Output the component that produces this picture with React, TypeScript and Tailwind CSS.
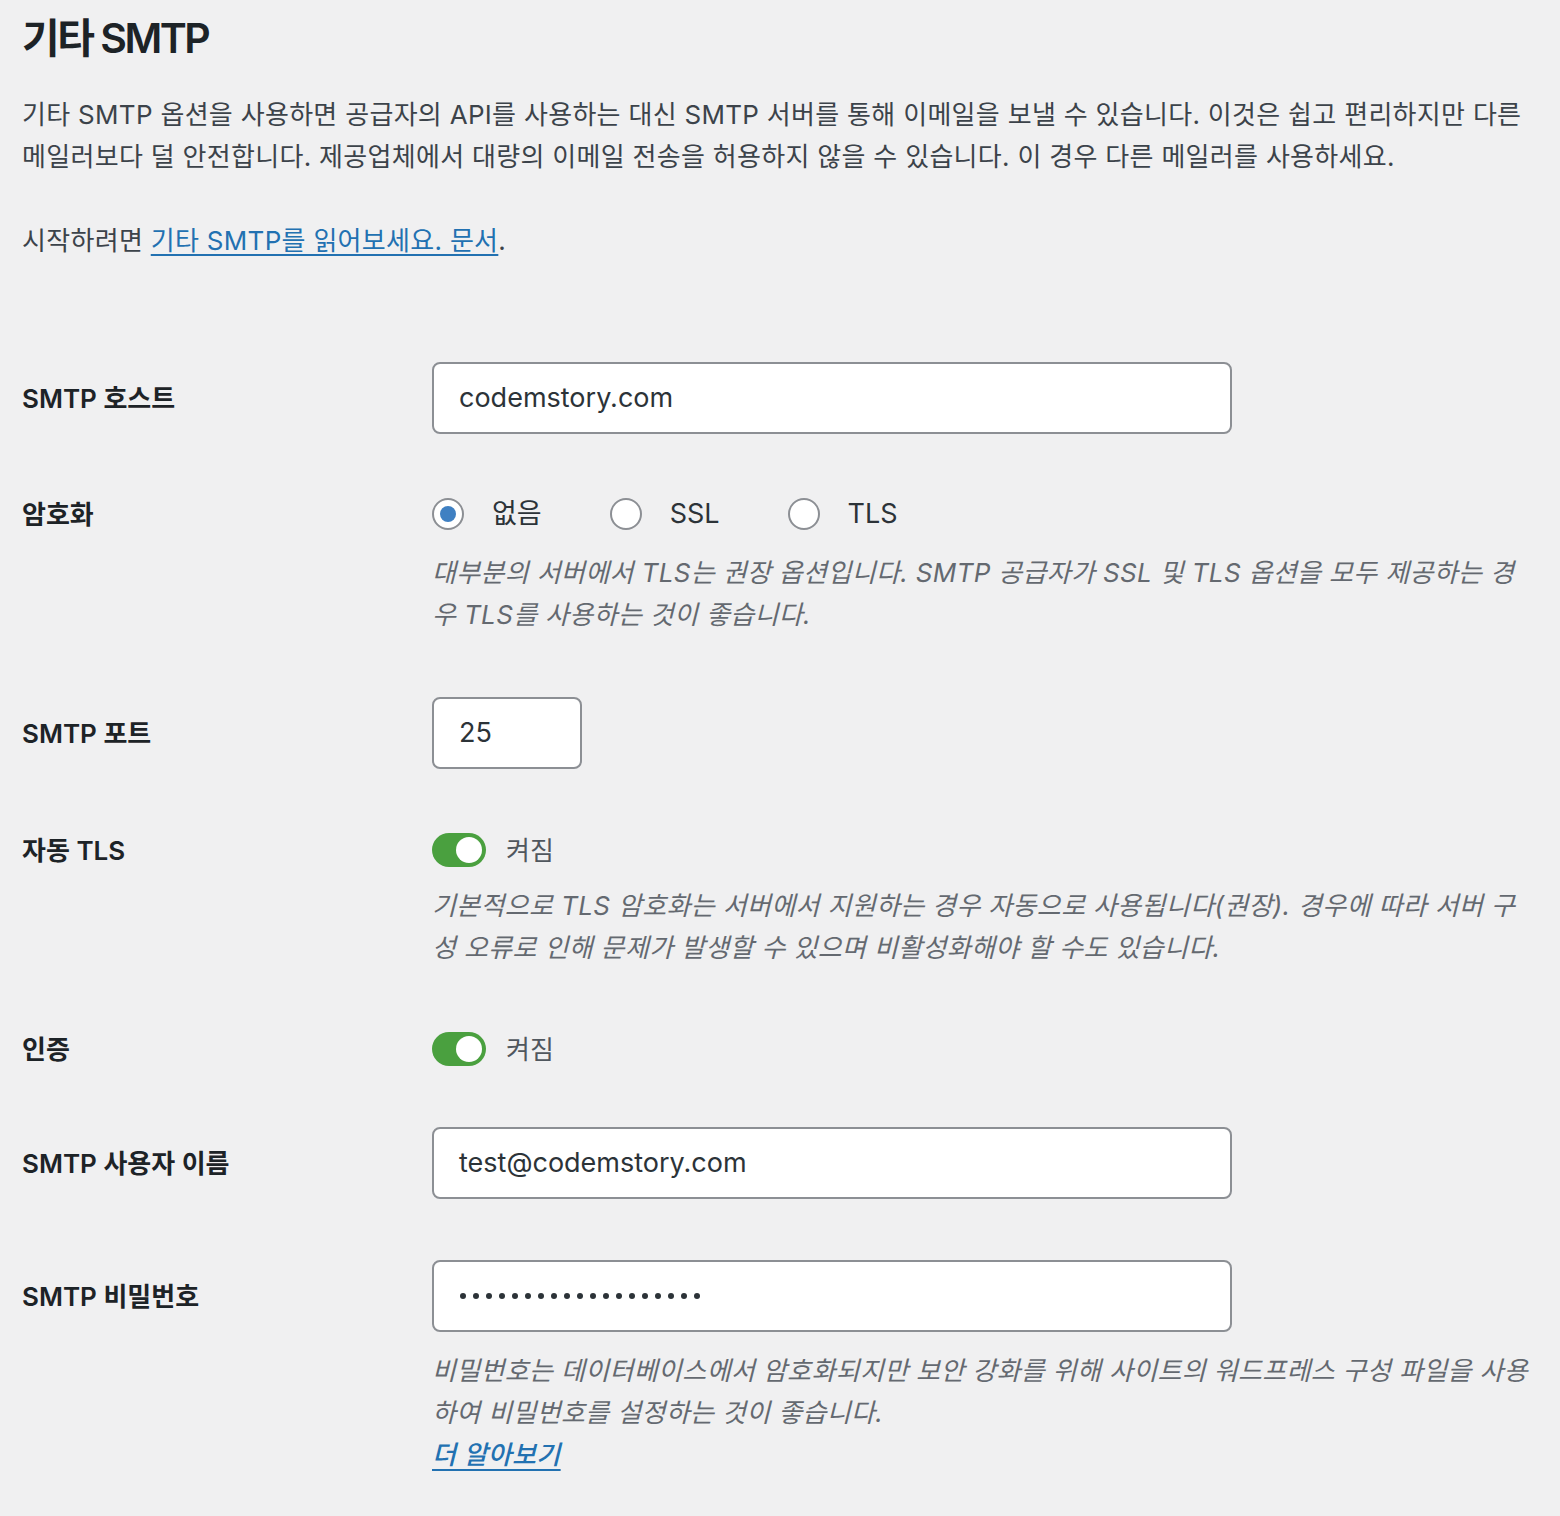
import React from 'react'

const Radio = ({ checked, label }: { checked?: boolean; label: string }) => (
  <label className="flex items-center mr-[68px]">
    <span className="w-[32px] h-[32px] rounded-full border-2 border-[#8c8f94] bg-white flex items-center justify-center">
      {checked && <span className="w-[16px] h-[16px] rounded-full bg-[#3f80c2]" />}
    </span>
    <span className="ml-[28px] text-[27px] text-[#2c3338]">{label}</span>
  </label>
)

const Toggle = () => (
  <div className="flex items-center h-[36px]">
    <span className="w-[54px] h-[34px] rounded-full bg-[#4aa03f] flex items-center justify-end px-[4px]">
      <span className="w-[26px] h-[26px] rounded-full bg-white" />
    </span>
    <span className="ml-[20px] text-[26px] text-[#50575e]">켜짐</span>
  </div>
)

const Field = ({ value, width = 'w-[800px]' }: { value: string; width?: string }) => (
  <div className={`${width} h-[72px] rounded-[8px] border-2 border-[#8c8f94] bg-white flex items-center pl-[25px] text-[27px] text-[#2c3338]`}>
    {value}
  </div>
)

function Label({ children, h }: { children: React.ReactNode; h: string }) {
  return (
    <div className={`w-[410px] shrink-0 flex items-center font-semibold text-[26px] text-[#1d2327] ${h}`}>
      {children}
    </div>
  )
}

const Desc = ({ children }: { children: React.ReactNode }) => (
  <p className="ml-[410px] mt-[17px] text-[26px] leading-[42px] italic text-[#646970] tracking-[0.35px] whitespace-nowrap">
    {children}
  </p>
)

export default function App() {
  return (
    <div className="min-h-[1516px] bg-[#f0f0f1] px-[22px] pt-[8px] font-['Inter','Noto_Sans_CJK_KR',sans-serif]">
      <h1 className="text-[41px] leading-[60px] font-semibold text-[#1d2327] tracking-[-2.5px]">기타 SMTP</h1>

      <p className="mt-[26px] text-[26px] leading-[42px] text-[#3c434a] tracking-[0.3px] whitespace-nowrap">
        기타 SMTP 옵션을 사용하면 공급자의 API를 사용하는 대신 SMTP 서버를 통해 이메일을 보낼 수 있습니다. 이것은 쉽고 편리하지만 다른
        <br />
        메일러보다 덜 안전합니다. 제공업체에서 대량의 이메일 전송을 허용하지 않을 수 있습니다. 이 경우 다른 메일러를 사용하세요.
      </p>

      <p className="mt-[42px] text-[26px] leading-[42px] text-[#3c434a] tracking-[0.3px]">
        시작하려면{' '}
        <a href="#" className="text-[#2271b1] underline underline-offset-[4px]">
          기타 SMTP를 읽어보세요. 문서
        </a>
        .
      </p>

      <div className="mt-[100px] flex flex-col">
        {/* host */}
        <div className="flex">
          <Label h="h-[72px]">SMTP 호스트</Label>
          <Field value="codemstory.com" />
        </div>

        {/* encryption */}
        <div className="flex mt-[59px]">
          <Label h="h-[42px]">암호화</Label>
          <div className="flex items-center h-[42px]">
            <Radio checked label="없음" />
            <Radio label="SSL" />
            <Radio label="TLS" />
          </div>
        </div>
        <Desc>
          대부분의 서버에서 TLS는 권장 옵션입니다. SMTP 공급자가 SSL 및 TLS 옵션을 모두 제공하는 경
          <br />우 TLS를 사용하는 것이 좋습니다.
        </Desc>

        {/* port */}
        <div className="flex mt-[61px]">
          <Label h="h-[72px]">SMTP 포트</Label>
          <Field value="25" width="w-[150px]" />
        </div>

        {/* auto tls */}
        <div className="flex mt-[63px]">
          <Label h="h-[36px]">자동 TLS</Label>
          <Toggle />
        </div>
        <Desc>
          기본적으로 TLS 암호화는 서버에서 지원하는 경우 자동으로 사용됩니다(권장). 경우에 따라 서버 구
          <br />성 오류로 인해 문제가 발생할 수 있으며 비활성화해야 할 수도 있습니다.
        </Desc>

        {/* auth */}
        <div className="flex mt-[62px]">
          <Label h="h-[36px]">인증</Label>
          <Toggle />
        </div>

        {/* username */}
        <div className="flex mt-[60px]">
          <Label h="h-[72px]">SMTP 사용자 이름</Label>
          <Field value="test@codemstory.com" />
        </div>

        {/* password */}
        <div className="flex mt-[61px]">
          <Label h="h-[72px]">SMTP 비밀번호</Label>
          <div className="w-[800px] h-[72px] rounded-[8px] border-2 border-[#8c8f94] bg-white flex items-center pl-[26px] gap-[7px]">
            {Array.from({ length: 19 }).map((_, i) => (
              <span key={i} className="w-[6px] h-[6px] rounded-full bg-[#2c3338]" />
            ))}
          </div>
        </div>
        <p className="ml-[410px] mt-[18px] text-[26px] leading-[42px] italic text-[#646970] tracking-[0.35px] whitespace-nowrap">
          비밀번호는 데이터베이스에서 암호화되지만 보안 강화를 위해 사이트의 워드프레스 구성 파일을 사용
          <br />
          하여 비밀번호를 설정하는 것이 좋습니다.
          <br />
          <a href="#" className="font-medium text-[#2271b1] underline underline-offset-[5px]">
            더 알아보기
          </a>
        </p>
      </div>
    </div>
  )
}
